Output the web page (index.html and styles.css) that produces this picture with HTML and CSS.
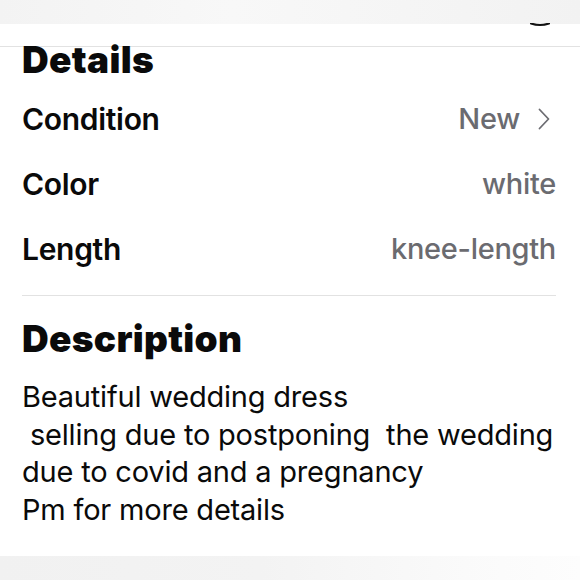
FILE: index.html
```html
<!DOCTYPE html>
<html>
<head>
<meta charset="utf-8">
<link rel="stylesheet" href="styles.css">
</head>
<body>
<div class="screen">
  <div class="topband"></div>
  <div class="header">
    <svg class="arc" width="20" height="4" viewBox="0 0 20 4"><path d="M1 0.5 Q10 3.5 19 0.5" fill="none" stroke="#111" stroke-width="2.2" stroke-linecap="round"/></svg>
  </div>
  <main class="content">
    <h2 class="title">Details</h2>
    <div class="rows">
      <div class="row"><span class="label">Condition</span><span class="value">New<svg class="chev" width="12" height="22" viewBox="0 0 12 22"><path d="M1.5 1.5 L10.5 11 L1.5 20.5" fill="none" stroke="#6d6d72" stroke-width="1.8" stroke-linecap="round" stroke-linejoin="round"/></svg></span></div>
      <div class="row"><span class="label">Color</span><span class="value">white</span></div>
      <div class="row"><span class="label">Length</span><span class="value">knee-length</span></div>
    </div>
    <hr class="divider">
    <h2 class="title desc-title">Description</h2>
    <p class="desc">Beautiful wedding dress<br>&nbsp;selling due to postponing&nbsp; the wedding<br>due to covid and a pregnancy<br>Pm for more details</p>
  </main>
  <div class="bottomband"></div>
</div>
</body>
</html>
```
FILE: styles.css
```css
html, body {
  margin: 0;
  padding: 0;
  background: #ffffff;
}
.screen {
  width: 580px;
  height: 580px;
  display: flex;
  flex-direction: column;
  font-family: Inter, "Liberation Sans", sans-serif;
  color: #0a0a0a;
  overflow: hidden;
}
.topband {
  height: 24px;
  background: linear-gradient(90deg, #f3f3f3 0%, #f8f8f8 40%, #f5f5f5 70%, #f2f2f2 100%);
  flex: none;
}
.header {
  height: 22px;
  border-bottom: 1px solid #e2e2e2;
  display: flex;
  justify-content: flex-end;
  align-items: flex-start;
  padding-right: 30px;
  flex: none;
}
.arc {
  display: block;
  margin-top: -1px;
}
.content {
  flex: 1;
  padding: 0 24px 0 22px;
}
.title {
  margin: 0;
  font-size: 37px;
  font-weight: 900;
  line-height: 26px;
  letter-spacing: 0.3px;
}
.rows {
  display: flex;
  flex-direction: column;
  margin-top: 13px;
}
.row {
  height: 65px;
  display: flex;
  justify-content: space-between;
  align-items: center;
}
.label {
  font-size: 30px;
  font-weight: 600;
  letter-spacing: -0.3px;
}
.value {
  font-size: 29px;
  font-weight: 500;
  color: #6b6b70;
  display: flex;
  align-items: center;
  letter-spacing: -0.3px;
}
.chev {
  margin-left: 18px;
  margin-right: 6px;
}
.divider {
  border: none;
  border-top: 1px solid #e2e2e2;
  margin: 14px 0 0 0;
}
.desc-title {
  margin-top: 25px;
  line-height: 36px;
}
.desc {
  margin: 21px 0 0 0;
  font-size: 29px;
  font-weight: 400;
  line-height: 37.5px;
  letter-spacing: -0.2px;
  white-space: nowrap;
}
.bottomband {
  height: 24px;
  flex: none;
  background: linear-gradient(90deg, #f1f1f1 0%, #f3f3f3 45%, #fafafa 80%, #fdfdfd 100%);
}
```
